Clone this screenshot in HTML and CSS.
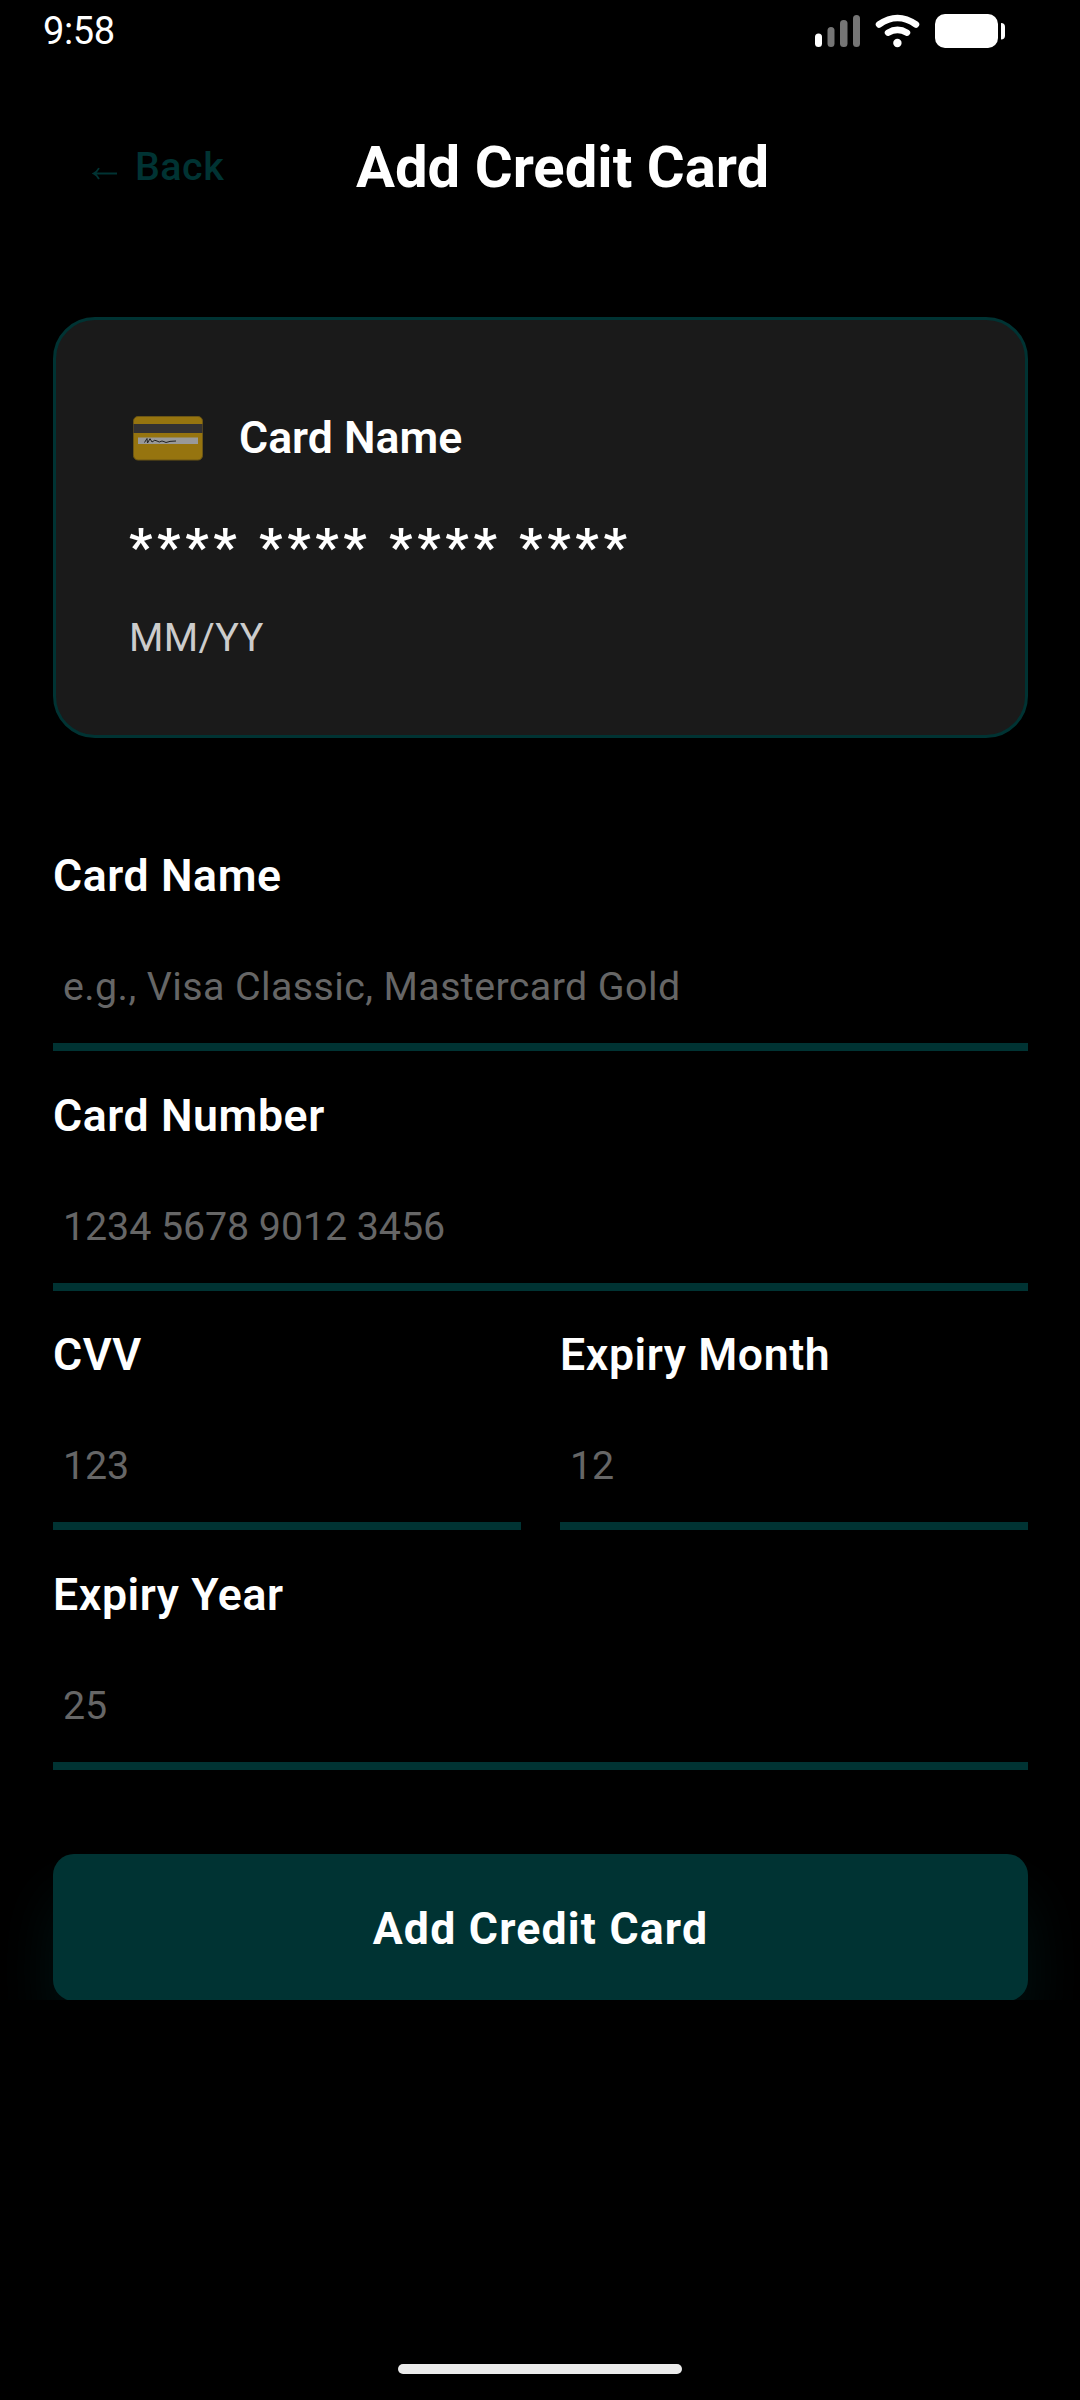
FILE: index.html
```html
<!DOCTYPE html>
<html lang="en">
  <head>
    <meta charset="UTF-8" />
    <meta name="viewport" content="width=device-width, initial-scale=1.0" />
    <title>Add Credit Card</title>
    <link rel="stylesheet" href="styles.css">
  </head>
  <body>
    <div class="status-bar">
      <span class="time">9:58</span>
      <svg class="status-icons" width="192" height="36" viewBox="0 0 192 36">
        <g fill="#757575">
          <rect x="12.5" y="14" width="7" height="20" rx="3.5" />
          <rect x="25" y="7" width="7.5" height="27" rx="3.5" />
          <rect x="38" y="2" width="7" height="32" rx="3.5" />
        </g>
        <rect x="0" y="20.5" width="7" height="13.5" rx="3.5" fill="#fff" />
        <g fill="none" stroke="#fff" stroke-linecap="round">
          <path d="M64 11.5Q82.500 -1.500 101 11.500" stroke-width="6.500" />
          <path d="M73 19.700Q82.500 14 92 19.700" stroke-width="6.500" />
        </g>
        <circle cx="82.400" cy="30" r="4.200" fill="#fff" />
        <rect x="120" y="1" width="63" height="34" rx="10" fill="#fff" />
        <path d="M186 10q4 0 4 4v8.500q0 4-4 4z" fill="#fff" />
      </svg>
    </div>

    <main class="screen">
      <header class="header">
        <a href="#" class="back">
          <svg class="back-arrow" width="26" height="14" viewBox="0 0 26 14">
            <path d="M25 6.500H2M7 1.200Q5 5 1.500 6.500Q5 8 7 12" />
          </svg>
          Back
        </a>
        <h1>Add Credit Card</h1>
      </header>

      <section class="card">
        <div class="card-top">
          <svg class="card-icon" width="70" height="45" viewBox="0 0 70 45">
            <rect x="0.500" y="0.500" width="69" height="43.500" rx="4.500" fill="#96740f" stroke="#6b5514" />
            <rect x="0.500" y="8" width="69" height="9" fill="#333132" />
            <rect x="5" y="21.500" width="60" height="6.500" fill="#999" />
            <path d="M11.500 26.500L14 22.500L14.500 27L17 22.700L19 26Q22 23 24 25T29 25Q31 25.500 33 26.500Q36 25 43 25" fill="none" stroke="#222" />
          </svg>
          <h2>Card Name</h2>
        </div>
        <p class="card-number">**** **** **** ****</p>
        <p class="card-expiry">MM/YY</p>
      </section>

      <form id="cardForm">
        <div class="field">
          <label for="cardName">Card Name</label>
          <input type="text" id="cardName" placeholder="e.g., Visa Classic, Mastercard Gold" />
        </div>
        <div class="field">
          <label for="cardNumber">Card Number</label>
          <input type="text" id="cardNumber" class="digits" placeholder="1234 5678 9012 3456" />
        </div>
        <div class="row">
          <div class="field">
            <label for="cvv">CVV</label>
            <input type="text" id="cvv" class="digits" placeholder="123" />
          </div>
          <div class="field">
            <label for="month">Expiry Month</label>
            <input type="text" id="month" class="digits" placeholder="12" />
          </div>
        </div>
        <div class="field">
          <label for="year">Expiry Year</label>
          <input type="text" id="year" class="digits" placeholder="25" />
        </div>
        <button type="submit" class="btn-add">Add Credit Card</button>
      </form>
    </main>

    <div class="home-bar"></div>
  </body>
</html>
```
FILE: styles.css
```css
* {
  box-sizing: border-box;
}

body {
  font-family: Roboto, sans-serif;
  background-color: #000;
  color: #fff;
  margin: 0;
  height: 2400px;
  display: flex;
  flex-direction: column;
  overflow: hidden;
}

.status-bar {
  height: 62px;
  padding: 13px 73px 0 43px;
  display: flex;
  justify-content: space-between;
  align-items: flex-start;
}

.time {
  font-size: 38px;
  line-height: 36px;
  letter-spacing: -0.4px;
}

.screen {
  height: 1938px;
  padding: 0 52px 0 53px;
  overflow: hidden;
}

.header {
  height: 255px;
  padding: 71px 0 0 39px;
  display: flex;
  align-items: flex-start;
}

.back {
  width: 264px;
  color: #003333;
  font-size: 39.4px;
  font-weight: 500;
  line-height: 68px;
  letter-spacing: 0.5px;
  text-decoration: none;
  display: flex;
  align-items: center;
  gap: 17px;
}

.back-arrow {
  margin-top: 14px;
  fill: none;
  stroke: #003333;
  stroke-width: 1.8;
}

h1 {
  font-size: 58px;
  font-weight: 700;
  line-height: 68px;
  margin: 0;
}

.card {
  height: 421px;
  padding: 88px 73px;
  background-color: #1a1a1a;
  border: 3px solid #003333;
  border-radius: 42px;
}

.card-top {
  display: flex;
  align-items: center;
  gap: 36px;
  height: 60px;
  padding-left: 4px;
}

.card h2 {
  font-size: 44.6px;
  font-weight: 600;
  line-height: 60px;
  margin: 0;
}

.card-number {
  font-size: 52.5px;
  font-weight: 600;
  line-height: 62px;
  letter-spacing: 4.55px;
  margin: 48px 0 0;
}

.card-expiry {
  font-size: 39.4px;
  line-height: 46px;
  letter-spacing: 0.4px;
  color: #ccc;
  margin: 37px 0 0;
}

form {
  padding-top: 108px;
}

.field {
  height: 239.5px;
  flex: 1;
}

label {
  display: block;
  font-size: 44.6px;
  font-weight: 600;
  line-height: 60px;
  letter-spacing: 0.6px;
}

input {
  display: block;
  width: 100%;
  height: 126px;
  margin-top: 19px;
  padding: 5px 10px 0;
  background: none;
  border: none;
  border-bottom: 8px solid #003333;
  border-radius: 0;
  color: #fff;
  font-family: inherit;
  font-size: 39.4px;
  letter-spacing: 0.4px;
}

.digits {
  letter-spacing: -0.08px;
}

input::placeholder {
  color: #666;
}

.row {
  display: flex;
  gap: 39px;
}

.btn-add {
  display: block;
  width: 100%;
  height: 147px;
  margin-top: 50px;
  padding: 3px 0 0;
  background-color: #003333;
  color: #fff;
  border: none;
  border-radius: 21px;
  font-family: inherit;
  font-size: 44.6px;
  font-weight: 700;
  letter-spacing: 1.2px;
  box-shadow: 0 42px 60px rgba(0, 51, 51, 0.35);
}

.home-bar {
  width: 284px;
  height: 10px;
  margin: 364px auto 0;
  background-color: #ebebeb;
  border-radius: 5px;
}
```
